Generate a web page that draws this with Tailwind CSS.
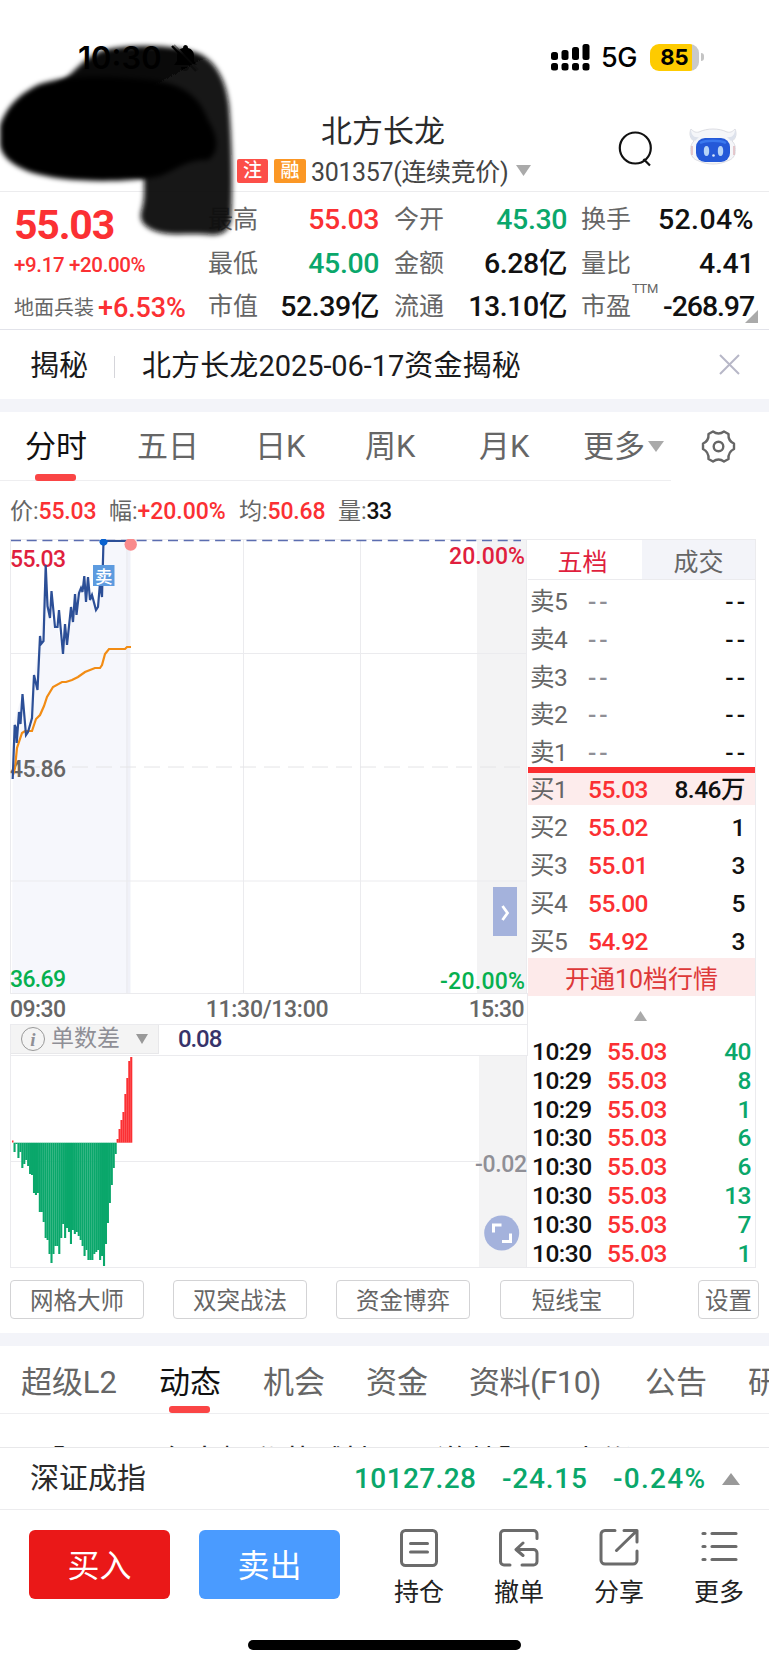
<!DOCTYPE html>
<html lang="zh-CN">
<head>
  <meta charset="UTF-8" />
  <title>北方长龙 301357</title>
  <meta name="viewport" content="width=device-width, initial-scale=1.0" />
  <script src="https://cdn.jsdelivr.net/npm/@tailwindcss/browser@4"></script>
</head>
<body class="bg-white w-[769px] h-[1665px] overflow-hidden relative font-['Roboto','Noto_Sans_CJK_SC',sans-serif] text-[#111] whitespace-nowrap">

  <!-- Status bar -->
  <div class="h-[112px] flex items-start justify-between pl-[78px] pr-[65px] pt-[40px] font-['Inter',sans-serif]">
    <div class="flex items-center h-[36px]">
      <span class="text-[31px] font-semibold text-black">10:30</span>
      <svg class="ml-[9px] w-[28px] h-[30px]" viewBox="0 0 28 30">
        <path d="M14 2a3 3 0 0 1 3 3c4 1 6 4 6 8v5l3 4H3l3-4v-5c0-4 2-7 6-8a3 3 0 0 1 2-3zM10 24h8a4 4 0 0 1-8 0z" fill="#000" />
        <path d="M3 2l24 25" stroke="#999" stroke-width="2" />
        <path d="M1 3l24 25" stroke="#000" stroke-width="2.4" />
      </svg>
    </div>
    <div class="flex items-center h-[34px]">
      <svg class="w-[39px] h-[28px]" viewBox="0 0 39 28">
        <g fill="#000">
          <rect x="0" y="9" width="7" height="8" rx="2.5" /><rect x="10.500" y="7" width="7" height="10" rx="2.500" />
          <rect x="21" y="4" width="7" height="13" rx="2.5" /><rect x="31.500" y="1" width="7" height="16" rx="2.500" />
          <rect x="0" y="20" width="7" height="7.500" rx="2.5" /><rect x="10.500" y="20" width="7" height="7.500" rx="2.5" />
          <rect x="21" y="20" width="7" height="7.500" rx="2.5" /><rect x="31.500" y="20" width="7" height="7.500" rx="2.5" />
        </g>
      </svg>
      <span class="ml-[11px] w-[38px] text-[27px] font-medium tracking-[-0.5px] text-black pt-[2px]">5G</span>
      <div class="ml-[11px] w-[49px] h-[27px] rounded-[9px] bg-[linear-gradient(90deg,#fecb00_86%,#c9c9c9_86%)] flex items-center justify-center text-[22px] font-bold text-black">85</div>
      <div class="ml-[2px] w-[3px] h-[8px] rounded-r-full bg-[#c4c4c4]"></div>
    </div>
  </div>

  <!-- Stock title -->
  <header class="h-[80px] flex border-b border-[#ececee]">
    <div class="w-[237px]"></div>
    <div class="w-[295px] flex flex-col">
      <h1 class="h-[40px] leading-[40px] text-[31px] text-[#2b2b2b] pl-[84px]">北方长龙</h1>
      <div class="h-[37px] flex items-center text-[#444]">
        <span class="w-[31px] h-[24px] rounded-[2px] bg-[#fc4f49] text-white text-[19px] leading-[24px] text-center font-medium">注</span>
        <span class="ml-[6px] w-[32px] h-[24px] rounded-[2px] bg-[#fb9725] text-white text-[19px] leading-[24px] text-center font-medium">融</span>
        <span class="ml-[5px] mt-[4px] text-[25px] tracking-[-0.35px] w-[200px]">301357(连续竞价)</span>
        <svg class="ml-[5px] w-[15px] h-[11px] shrink-0" viewBox="0 0 15 11"><path d="M0 0h15l-7.500 11z" fill="#aaa" /></svg>
      </div>
    </div>
    <svg class="ml-[86px] mt-[19px] w-[34px] h-[36px]" viewBox="0 0 34 36" fill="none" stroke="#111" stroke-width="2.200">
      <circle cx="17.300" cy="17" r="15.500" /><path d="M25.500 28l6.500 6.500" />
    </svg>
    <svg class="ml-[36px] mt-[14px] w-[50px] h-[42px]" viewBox="0 0 50 42">
      <path d="M3 3c2 2 4 4 8 3 8-4 20-4 28 0 4 1 6-1 8-3 2 4 1 10-3 12 3 3 4 6 3 13-2 5-5 6-8 7-8 4-20 4-28 0-3-1-6-2-8-7-1-7 0-10 3-13-4-2-5-8-3-12z" fill="#f5f6f9" stroke="#dcdde3" stroke-width="1" />
      <path d="M3 3c0 6 3 9 8 8L7 15C2 13 1 8 3 3zM47 3c0 6-3 9-8 8l4 4c5-2 6-7 4-12z" fill="#dde2ec" />
      <path d="M4 20v9M46 20v9" stroke="#e0b9bf" stroke-width="1.500" />
      <rect x="8" y="12" width="34" height="24" rx="9" fill="#2459d8" /><path d="M12 17c6-3 20-3 26 0" stroke="#3a78ee" stroke-width="2.500" fill="none" />
      <ellipse cx="18.500" cy="25" rx="2.700" ry="5" fill="#b7d4f7" /><ellipse cx="32.500" cy="25" rx="2.700" ry="5" fill="#b7d4f7" />
      <circle cx="25.500" cy="29.500" r="1.300" fill="#dce9fb" />
    </svg>
  </header>

  <!-- Quote summary -->
  <section class="h-[138px] flex border-b border-[#e2e3ea] relative">
    <div class="w-[208px] pl-[14px] text-[#fb3033]">
      <div class="mt-[5px] h-[56px] leading-[56px] text-[41px] font-bold tracking-[-1.2px]">55.03</div>
      <div class="h-[24px] leading-[24px] text-[20.500px] tracking-[-0.35px] font-medium">+9.17 +20.00%</div>
      <div class="mt-[13px] h-[36px] flex items-center">
        <span class="text-[20px] text-[#666] w-[84px]">地面兵装</span>
        <span class="text-[27px] font-medium tracking-[-0.1px]">+6.53%</span>
      </div>
    </div>
    <div class="w-[171px] flex flex-col pt-[6px] text-[28.500px] font-medium tracking-[-0.4px]">
      <div class="h-[44px] flex items-center justify-between"><span class="text-[25px] font-normal text-[#666] tracking-normal">最高</span><span class="text-[#fb3033]">55.03</span></div>
      <div class="h-[44px] flex items-center justify-between"><span class="text-[25px] font-normal text-[#666] tracking-normal">最低</span><span class="text-[#0aa76b]">45.00</span></div>
      <div class="h-[42px] flex items-center justify-between"><span class="text-[25px] font-normal text-[#666] tracking-normal">市值</span><span>52.39亿</span></div>
    </div>
    <div class="ml-[15px] w-[173px] flex flex-col pt-[6px] text-[28.500px] font-medium tracking-[-0.4px]">
      <div class="h-[44px] flex items-center justify-between"><span class="text-[25px] font-normal text-[#666] tracking-normal">今开</span><span class="text-[#0aa76b]">45.30</span></div>
      <div class="h-[44px] flex items-center justify-between"><span class="text-[25px] font-normal text-[#666] tracking-normal">金额</span><span>6.28亿</span></div>
      <div class="h-[42px] flex items-center justify-between"><span class="text-[25px] font-normal text-[#666] tracking-normal">流通</span><span>13.10亿</span></div>
    </div>
    <div class="ml-[14px] w-[173px] flex flex-col pt-[6px] text-[28.500px] font-medium tracking-[-0.4px]">
      <div class="h-[44px] flex items-center justify-between"><span class="text-[25px] font-normal text-[#666] tracking-normal">换手</span><span class="tracking-[0.400px]">52.04%</span></div>
      <div class="h-[44px] flex items-center justify-between"><span class="text-[25px] font-normal text-[#666] tracking-normal">量比</span><span>4.41</span></div>
      <div class="h-[42px] flex items-center justify-between"><span class="text-[25px] font-normal text-[#666] tracking-normal">市盈</span><span class="tracking-[-1.1px]">-268.97</span></div>
    </div>
    <span class="absolute left-[632px] top-[88px] text-[13px] leading-[18px] text-[#666] tracking-[-0.3px]">TTM</span>
    <svg class="absolute left-[745px] top-[118px] w-[13px] h-[13px]" viewBox="0 0 13 13"><path d="M13 0v13H0z" fill="#aaa" /></svg>
  </section>

  <!-- Notice -->
  <section class="h-[69px] flex items-center pl-[30px] pr-[29px] text-[29px] text-[#1a1a1c]">
    <span class="w-[84px] pt-[4px]">揭秘</span>
    <span class="w-px h-[22px] bg-[#d5d5da] mt-[5px]"></span>
    <span class="ml-[27px] pt-[4px] flex-1 tracking-[0.1px]">北方长龙<span class="tracking-[-0.05px]">2025-06-17</span>资金揭秘</span>
    <svg class="w-[21px] h-[21px]" viewBox="0 0 21 21"><path d="M1 1l19 19M20 1L1 20" stroke="#b7b7c7" stroke-width="2" /></svg>
  </section>
  <div class="h-[13px] bg-[#f3f4f9]"></div>

  <!-- Period tabs -->
  <nav class="h-[69px] flex text-[31px] leading-[69px] text-[#666]">
    <div class="w-[671px] flex border-b border-[#eeeef0]">
      <span class="ml-[25px] w-[112px] text-[#111] relative">分时<i class="absolute left-[10px] top-[62px] w-[41px] h-[7px] rounded-[3px] bg-[#fa4545]"></i></span>
      <span class="w-[118px]">五日</span>
      <span class="w-[110px]">日K</span>
      <span class="w-[114px]">周K</span>
      <span class="w-[104px]">月K</span>
      <span class="flex items-center h-[69px]">更多<svg class="ml-[3px] w-[16px] h-[11px]" viewBox="0 0 16 11"><path d="M0 0h16l-8 11z" fill="#aaa" /></svg></span>
    </div>
    <svg class="ml-[30px] mt-[17px] w-[35px] h-[35px]" viewBox="0 0 35 35" fill="none" stroke="#666" stroke-width="2.400" stroke-linejoin="round">
      <path d="M12 2.500Q17.500 6.500 23 2.500L27.500 5Q27 12 33 14.500V20Q27 23 27.500 30L23 32.500Q17.500 28.500 12 32.500L7.500 30Q8 23 2 20V14.500Q8 12 7.500 5Z" />
      <circle cx="17.500" cy="17.500" r="4.800" />
    </svg>
  </nav>

  <!-- Cursor values -->
  <div class="h-[58px] flex items-center pl-[10px] pt-[5px] text-[23px] text-[#666]">
    <div class="w-[99px]">价:<b class="text-[#fb3033] font-medium tracking-[-0.2px]">55.03</b></div>
    <div class="w-[130px]">幅:<b class="text-[#fb3033] font-medium tracking-[-0.05px]">+20.00%</b></div>
    <div class="w-[99px]">均:<b class="text-[#fb3033] font-medium tracking-[-0.2px]">50.68</b></div>
    <div>量:<b class="text-[#111] font-medium tracking-[-0.7px]">33</b></div>
  </div>

  <main class="h-[729px] flex pl-[10px]">
    <!-- Charts -->
    <div class="w-[518px] flex flex-col">
      <svg class="w-[518px] h-[455px]" viewBox="10 539 518 455" font-size="23" font-weight="500" font-family="Roboto, sans-serif">
        <rect x="477" y="540" width="50" height="454" fill="#f3f3f4" />
        <path d="M12.700 779V725L22.500 694L26 735L34 675L40 640L45.700 565L50 618L57.500 627L63 654L75 594L88 577L96 610L103.500 541H130V994H12z" fill="#f6f7fc" />
        <rect x="126" y="541" width="4.500" height="453" fill="#f0f1f8" />
        <path d="M10.500 539V994M127 539V994M243.500 539V994M360.500 539V994M526.500 539V994M10 539.500H528M10 653.500H526M10 881H526M10 993.500H528" stroke="#ebebee" fill="none" />
        <path d="M24 767H526" stroke="#e4e4e6" stroke-dasharray="16 8" />
        <path d="M11 540.500H521" stroke="#5b6db0" stroke-width="1.600" stroke-dasharray="10 5.700" />
        <g>
          <text x="10" y="566.500" fill="#e01f3e" textLength="56">55.03</text>
          <text x="449" y="564" fill="#e01f3e" textLength="76">20.00%</text>
          <text x="10" y="776.500" fill="#666" textLength="56">45.86</text>
          <text x="10" y="987" fill="#06b04f" textLength="56">36.69</text>
          <text x="440" y="989" fill="#06b04f" textLength="85">-20.00%</text>
        </g>
        <polyline fill="none" stroke="#f28c14" stroke-width="2.200" points="13,775 15,768 17,748 22,733 25,731 32,731 36,719 40,715 44,706 47,697 53,687 62,682 66,682 72,680 78,677 85,672 90,670 95,668 100,668 102,665 105,654 109,649 125,649 127,647 131,647" />
        <polyline fill="none" stroke="#2c4f97" stroke-width="2.200" points="12.7,779 14.7,725 16,728 16.7,743 19,712 20.5,724 22.5,694 26,735 28,732 32,718 34,675 37.5,690 40,636 41,644 43.5,641 45.7,565 47.5,606 50,618 51.5,591 55,627 57.5,627 59,610 63,654 65,624 67,645 71,607 73,622 75,594 76.500,615 79,593 81,588 82.500,592 84.300,576 86,602 88,577 90,600 92,595 96,610 98,607 100,583 102,597 103.500,541 130,541" />
        <path d="M99.500 540h8a4 4 0 0 1-8 2.500z" fill="#0a62cf" />
        <circle cx="103.500" cy="542" r="3.500" fill="#0a62cf" />
        <circle cx="130.700" cy="544.500" r="6.200" fill="#f98a8c" />
        <rect x="93" y="565" width="21.500" height="21" fill="#5d9bdf" />
        <text x="95" y="582.500" font-size="17.500" font-family="Noto Sans CJK SC, sans-serif" fill="#fff">卖</text>
        <rect x="493" y="887" width="24" height="49" fill="#a4b2dc" />
        <path d="M502.500 906l5 7-5 7" stroke="#fff" stroke-width="2.800" fill="none" />
      </svg>
      <div class="h-[30px] flex items-center justify-between pt-[3px] pr-[3px] text-[23px] text-[#666] font-medium border-r border-[#ebebee]">
        <span class="tracking-[-0.6px]">09:30</span><span class="tracking-[-0.300px]">11:30/13:00</span><span class="tracking-[-0.6px]">15:30</span>
      </div>
      <div class="h-[32px] flex border-y border-[#ebebee] border-l border-r">
        <div class="w-[148px] h-[29px] bg-[#f4f4f4] border-r border-b border-[#e8e8ea] flex items-center pl-[10px] text-[23px] text-[#8f8f96]">
          <span class="w-[24px] h-[24px] shrink-0 rounded-full border border-[#999] flex items-center justify-center font-['Liberation_Serif',serif] italic font-bold text-[19px] leading-none">i</span>
          <span class="ml-[6px] pt-px w-[70px]">单数差</span>
          <svg class="ml-[15px] w-[12px] h-[10px] shrink-0" viewBox="0 0 12 10"><path d="M0 0h12l-6 10z" fill="#999" /></svg>
        </div>
        <span class="ml-[19px] leading-[29px] text-[24px] font-medium tracking-[-1.1px] text-[#37336a]">0.08</span>
      </div>
      <svg id="diff" class="w-[518px] h-[212px]" viewBox="10 1056 518 212" font-size="23" font-weight="500" font-family="Roboto, sans-serif">
        <rect x="479" y="1056" width="48" height="212" fill="#f3f3f4" />
        <path d="M10.500 1056V1268M526.500 1056V1268M10 1161.500H480M10 1267.500H528" stroke="#ebebee" fill="none" />
        <g id="bars"></g>
        <text x="475" y="1171.500" fill="#8f8f96" textLength="52">-0.02</text>
        <circle cx="501.700" cy="1233" r="17.500" fill="#a4b2dc" />
        <path d="M493.500 1232.500V1225H501.500M510.500 1233.500V1241.500H502" stroke="#fff" stroke-width="3" fill="none" />
      </svg>
    </div>

    <!-- Order book -->
    <aside class="w-[228px] border-r border-b border-[#ebebee] text-[24.500px] font-medium tracking-[-0.5px]">
      <div class="h-[41px] flex border-y border-[#ebebee] text-[25px] leading-[45px] text-center font-normal tracking-normal">
        <span class="w-[114px] pr-[5px] text-[#e01f3e]">五档</span>
        <span class="flex-1 bg-[#f3f4f9] text-[#666]">成交</span>
      </div>
      <div id="asks" class="pt-[3px]"></div>
      <div class="-mt-[4px] h-[6px] w-[227px] bg-[#fb2d30] relative"></div>
      <div id="bids"></div>
      <div class="-mt-[2px] h-[38px] leading-[43px] bg-[#fdeaea] text-center text-[25px] font-normal tracking-normal text-[#dd3838]">开通10档行情</div>
      <div class="h-[42px] flex justify-center pt-[15px]"><svg class="-ml-[2px] w-[13px] h-[10px]" viewBox="0 0 13 10"><path d="M0 10h13l-6.500-10z" fill="#aaa" /></svg></div>
      <div id="ticks"></div>
    </aside>
  </main>

  <!-- Tools -->
  <div class="h-[65px] pt-[12px] flex pl-[10px] text-[23.500px] leading-[40px] text-center text-[#666]">
    <span class="w-[134px] h-[39px] mr-[29px] border border-[#d3d3d5] rounded-[4px]">网格大师</span>
    <span class="w-[134px] h-[39px] mr-[29px] border border-[#d3d3d5] rounded-[4px]">双突战法</span>
    <span class="w-[134px] h-[39px] mr-[30px] border border-[#d3d3d5] rounded-[4px]">资金博弈</span>
    <span class="w-[134px] h-[39px] mr-[64px] border border-[#d3d3d5] rounded-[4px]">短线宝</span>
    <span class="w-[61px] h-[39px] border border-[#d3d3d5] rounded-[4px]">设置</span>
  </div>
  <div class="h-[13px] bg-[#f3f4f9]"></div>

  <!-- Info tabs -->
  <nav class="h-[68px] flex border-b border-[#eeeef0] pl-[21px] text-[31px] leading-[74px] text-[#666]">
    <span class="w-[138px] shrink-0 tracking-[-0.1px]">超级L2</span>
    <span class="w-[104px] shrink-0 text-[#111] relative">动态<i class="absolute left-[10px] top-[60px] w-[41px] h-[7px] rounded-[3px] bg-[#fa4545]"></i></span>
    <span class="w-[103px] shrink-0">机会</span>
    <span class="w-[103px] shrink-0">资金</span>
    <span class="w-[176px] shrink-0 tracking-[-0.5px]">资料(F10)</span>
    <span class="w-[103px] shrink-0">公告</span>
    <span class="shrink-0">研</span>
  </nav>
  <div class="h-[34px] overflow-hidden border-b border-[#e8e8ea] pl-[34px] pt-[25px] text-[31px] leading-[46px] text-[#222]">【国一股东大幅私募减持团：激战】飞时联讯、回</div>

  <!-- Index -->
  <div class="h-[62px] flex items-center border-b border-[#ececee] pl-[30px] text-[29px] leading-[66px]">
    <span class="w-[324px] text-[#2b2b2b]">深证成指</span>
    <span class="w-[148px] text-[28px] font-medium tracking-[0.4px] text-[#0aa76b]">10127.28</span>
    <span class="w-[111px] text-[28px] font-medium tracking-[0.8px] text-[#0aa76b]">-24.15</span>
    <span class="w-[109px] text-[28px] font-medium tracking-[1.300px] text-[#0aa76b]">-0.24%</span>
    <svg class="w-[18px] h-[12px]" viewBox="0 0 18 12"><path d="M0 12h18L9 0z" fill="#999" /></svg>
  </div>

  <!-- Trade actions -->
  <footer class="flex pt-[20px] pl-[29px]">
    <button class="w-[141px] h-[69px] rounded-[6px] bg-[#ea1818] text-white text-[32px] leading-[72px]">买入</button>
    <button class="ml-[29px] w-[141px] h-[69px] rounded-[6px] bg-[#4a9bff] text-white text-[32px] leading-[72px]">卖出</button>
    <div class="ml-[29px] w-[400px] -mt-px grid grid-cols-4 text-center text-[25px] leading-[47px] text-[#222]">
      <div class="flex flex-col items-center">
        <svg class="w-[40px] h-[40px]" viewBox="0 0 40 40" fill="none" stroke="#6b6b6b" stroke-width="3" stroke-linecap="round"><rect x="2.500" y="1.500" width="35" height="35" rx="4" /><path d="M11.500 14.500h17M11.500 23h17" /></svg>
        <span>持仓</span>
      </div>
      <div class="flex flex-col items-center">
        <svg class="w-[40px] h-[40px]" viewBox="0 0 40 40" fill="none" stroke="#6b6b6b" stroke-width="3" stroke-linecap="round" stroke-linejoin="round"><path d="M38 9.500V5a3.500 3.500 0 0 0-3.500-3.500H5A3.500 3.500 0 0 0 1.500 5V32.500A3.500 3.500 0 0 0 5 36H11M23 36H34.500A3.500 3.500 0 0 0 38 32.500V24a3.500 3.500 0 0 0-3.500-3.500H18M24 14l-7 6.500 7 6" /></svg>
        <span>撤单</span>
      </div>
      <div class="flex flex-col items-center">
        <svg class="w-[40px] h-[40px]" viewBox="0 0 40 40" fill="none" stroke="#6b6b6b" stroke-width="3" stroke-linecap="round" stroke-linejoin="round"><path d="M16 1.500H6A4 4 0 0 0 2 5.500V31A4 4 0 0 0 6 35H34A4 4 0 0 0 38 31V22M25 1.500H38V13M37 2.500L17.500 21.500" /></svg>
        <span>分享</span>
      </div>
      <div class="flex flex-col items-center">
        <svg class="w-[40px] h-[40px]" viewBox="0 0 40 40" fill="none" stroke="#6b6b6b" stroke-width="3.200" stroke-linecap="round"><path d="M13 4.500H37M13 17.500H37M13 30.500H37M4 4.500H6M4 17.500H6M4 30.500H6" /></svg>
        <span>更多</span>
      </div>
    </div>
  </footer>
  <div class="mx-auto mt-[24px] w-[273px] h-[10px] rounded-full bg-black"></div>

  <!-- Brush marks over the top left corner -->
  <svg class="absolute left-0 top-0 w-[260px] h-[250px]" viewBox="0 0 260 250">
    <defs>
      <filter id="soft" x="-10%" y="-10%" width="120%" height="120%"><feGaussianBlur stdDeviation="2.600" /></filter>
      <linearGradient id="ink" x1="0" y1="0" x2="0.500" y2="1"><stop offset="0" stop-color="#000" /><stop offset=".35" stop-color="#060606" /><stop offset=".6" stop-color="#0b0b0b" /></linearGradient>
    </defs>
    <path filter="url(#soft)" fill="url(#ink)" fill-opacity=".96" d="M58 84C76 72 82 58 104 50C135 43 178 45 200 54C216 62 226 80 229 105C232 140 233 190 231 220C229 230 224 235 212 235C190 232 170 237 155 231C145 227 139 222 141 212C145 200 144 190 144 178L60 150Z" />
    <path filter="url(#soft)" fill="#000" d="M0 126C6 106 22 92 40 84C70 74 110 76 150 80C185 84 200 98 208 120C218 136 220 152 208 160C185 160 180 168 160 176C120 184 60 182 30 172C10 164 2 156 0 145Z" />
  </svg>

  <script>
    const row = (label, price, priceColor, vol, cls) =>
      `<div class="flex items-center pt-[2px] pl-[2px] pr-[10px] ${cls}">
        <span class="w-[58px] font-normal text-[#666]">${label}</span>
        <span class="flex-1 ${priceColor}">${price}</span><span>${vol}</span>
      </div>`;

    document.getElementById("asks").innerHTML = [5, 4, 3, 2, 1]
      .map(n => row("卖" + n, "--", "text-[#8f8f96] tracking-[3px]", '<i class="not-italic tracking-[3px] -mr-[3px]">--</i>', "h-[37.6px]")).join("");

    const bids = [["55.03", "8.46万"], ["55.02", "1"], ["55.01", "3"], ["55.00", "5"], ["54.92", "3"]];
    document.getElementById("bids").innerHTML = bids
      .map(([p, v], i) => row("买" + (i + 1), p, "text-[#fb3033]", v, i ? "h-[37.7px]" : "h-[32px] mb-[4px] bg-[#fdecec]")).join("");

    const ticks = [["10:29", 40], ["10:29", 8], ["10:29", 1], ["10:30", 6], ["10:30", 6], ["10:30", 13], ["10:30", 7], ["10:30", 1]];
    document.getElementById("ticks").innerHTML = ticks
      .map(([t, v]) => `<div class="h-[28.9px] flex items-center pl-[4px] pr-[4px]">
        <span class="w-[75px]">${t}</span><span class="flex-1 text-[#fb3033]">55.03</span><span class="text-[#0aa76b]">${v}</span>
      </div>`).join("");

    // one bar per minute, y of the bar's free end; the zero line is at 1142.7
    const ends = [1152, 1144, 1158, 1152, 1168, 1164, 1160, 1166, 1174, 1175, 1193, 1195, 1193, 1212, 1212, 1222, 1238, 1240, 1254, 1263,
      1254, 1246, 1246, 1254, 1238, 1224, 1238, 1228, 1232, 1244, 1230, 1234, 1232, 1236, 1240, 1246, 1256, 1250, 1260, 1260, 1260,
      1254, 1252, 1250, 1260, 1256, 1266, 1244, 1223, 1203, 1185, 1168, 1154, 1139, 1129, 1120, 1112, 1094, 1078, 1061, 1057];
    const zero = 1142.7;
    document.getElementById("bars").innerHTML = '<rect x="12" y="1140.500" width="1.500" height="2" fill="#fb3033" />' + ends
      .map((y, i) => `<rect x="${13.5 + i * 1.945}" y="${Math.min(y, zero)}" width="2.1" height="${Math.abs(y - zero)}" fill="${y > zero ? "#0aa76b" : "#fb3033"}" />`).join("");
  </script>
</body>
</html>
